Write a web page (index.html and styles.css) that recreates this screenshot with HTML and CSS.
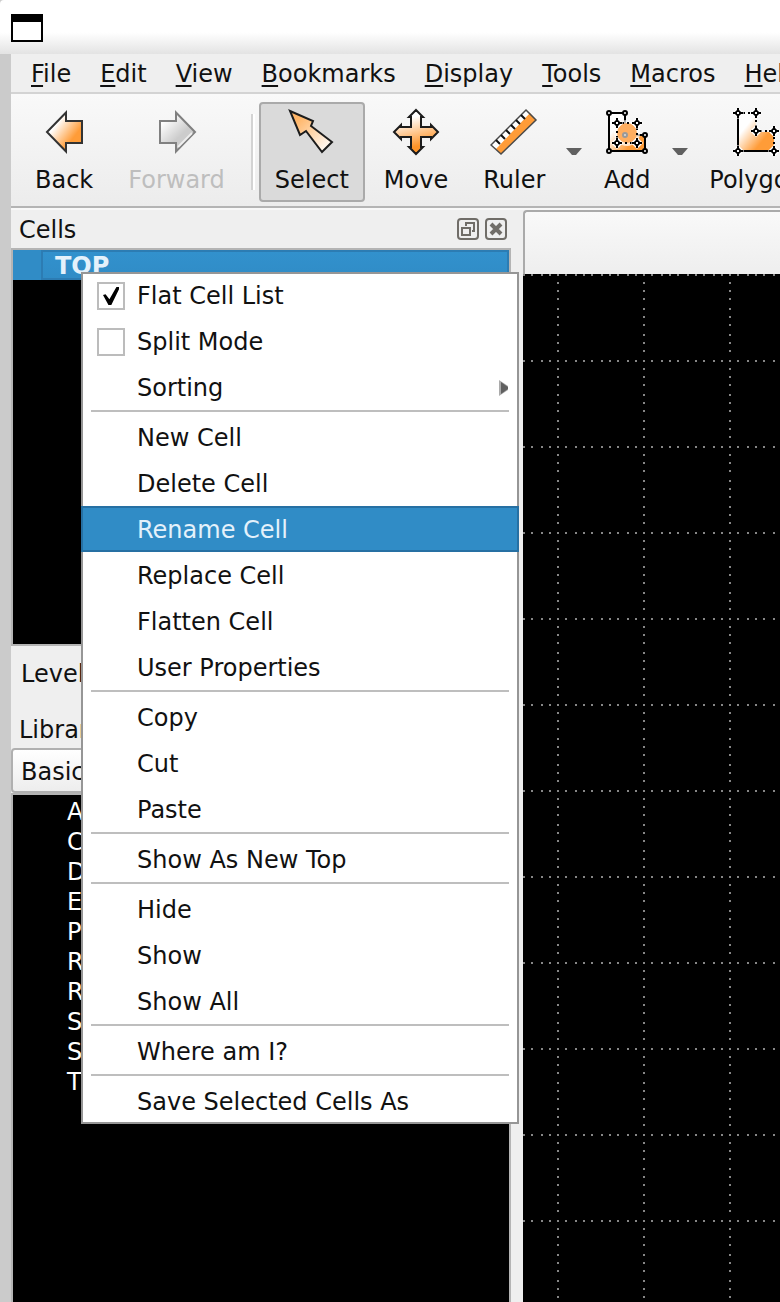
FILE: index.html
```html
<!DOCTYPE html>
<html lang="en">
<head>
<meta charset="utf-8">
<title>Layout Viewer</title>
<link rel="stylesheet" href="styles.css">
</head>
<body>
<div class="window">
  <header class="titlebar">
    <svg class="window-icon" width="32" height="28" viewBox="0 0 32 28" aria-hidden="true"><path d="M1 1h30v26H1z" fill="#fff" stroke="#000" stroke-width="2"/><path d="M0 0h32v8H0z"/></svg>
  </header>
  <div class="frame">
    <nav class="menubar" aria-label="Main menu">
      <button><u>F</u>ile</button><button><u>E</u>dit</button><button><u>V</u>iew</button><button><u>B</u>ookmarks</button><button><u>D</u>isplay</button><button><u>T</u>ools</button><button><u>M</u>acros</button><button><u>H</u>elp</button>
    </nav>
    <div class="toolbar" role="toolbar" aria-label="Tools">
      <button class="tool">
        <svg class="icon" viewBox="0 0 48 48"><defs><linearGradient id="warm" x1="0.15" y1="0.15" x2="0.85" y2="0.75"><stop offset="0.2" stop-color="#fff"/><stop offset="0.85" stop-color="#ff9c38"/></linearGradient></defs><path d="M7 24 26 4.500V13H42V35H26V43.500Z" fill="url(#warm)" stroke="#333" stroke-width="2"/></svg>
        <span>Back</span>
      </button>
      <button class="tool" disabled>
        <svg class="icon" viewBox="0 0 48 48"><defs><linearGradient id="grey" x1="0.1" y1="0.1" x2="0.7" y2="0.8"><stop offset="0.1" stop-color="#fff"/><stop offset="0.75" stop-color="#ccc"/></linearGradient></defs><path d="M42 24 23 4.500V13H7V35H23V43.500Z" fill="url(#grey)" stroke="#808080" stroke-width="2"/><path d="M25 39 39 25" stroke="#eee" stroke-width="2"/></svg>
        <span>Forward</span>
      </button>
      <span class="divider"></span>
      <button class="tool selected" aria-pressed="true">
        <svg class="icon" viewBox="0 0 48 48"><defs><linearGradient id="cursor" x1="0" y1="0" x2="1" y2="1"><stop offset="0.2" stop-color="#ffb669"/><stop offset="0.95" stop-color="#fff"/></linearGradient></defs><path d="M2 3 25 13 23 18 44 34 34 44 18 23 12 27Z" fill="url(#cursor)" stroke="#1c1c1c" stroke-width="2"/></svg>
        <span>Select</span>
      </button>
      <button class="tool">
        <svg class="icon" viewBox="0 0 48 48"><defs><linearGradient id="down" x1="0" y1="0" x2="0.25" y2="1"><stop offset="0.25" stop-color="#fff"/><stop offset="0.9" stop-color="#ff9428"/></linearGradient></defs><path d="M24 2 31 9H29V19H39V17L46 24 39 31V29H29V39H31L24 46 17 39H19V29H9V31L2 24 9 17V19H19V9H17Z" fill="url(#down)" stroke="#1c1c1c" stroke-width="2"/></svg>
        <span>Move</span>
      </button>
      <button class="tool">
        <svg class="icon" viewBox="0 0 48 48"><path d="M36 2 46 12 11 46 1 37Z" fill="#fff"/><path d="M40 5 46 12 11 46 6 41Z" fill="#ff9c38"/><path d="M36 2 46 12 11 46 1 37Z" fill="none" stroke="#4a4a4a" stroke-width="1.500"/><path d="M6 32l4 4M11 27l4 4M16 22l4 4M21 17l4 4M26 12l4 4M31 7l4 4" fill="none" stroke="#111" stroke-width="2"/></svg>
        <span>Ruler</span>
      </button>
      <button class="drop" aria-label="Ruler options"><svg width="16" height="8" viewBox="0 0 16 8"><path d="M0 0H16L10 7H6Z" fill="#606060"/></svg></button>
      <button class="tool">
        <svg class="icon" viewBox="0 0 48 48"><defs><symbol id="node" viewBox="0 0 12 12"><path d="M6 0 12 6 6 12 0 6Z" fill="#fff"/><path d="M6 1V11M1 6H11" stroke="#000" stroke-width="2"/><path d="M6 3 9 6 6 9 3 6Z" stroke="#000" stroke-width="1.500"/><path d="M5 5h2v2H5z" fill="#fff"/></symbol></defs><path d="M6 5H22V27H42V43H6Z" fill="url(#warm)"/><path d="M6 5H22V27H42V43H6Z" fill="none" stroke="#000" stroke-width="2"/><g fill="#fff" stroke="#000" stroke-width="2"><circle cx="6" cy="5" r="2"/><circle cx="22" cy="5" r="2"/><circle cx="42" cy="27" r="2"/><circle cx="42" cy="43" r="2"/><circle cx="6" cy="43" r="2"/></g><circle cx="24" cy="25" r="13" fill="#fff" opacity="0.700"/><circle cx="24" cy="25" r="10" fill="#ffae60"/><path d="M14 15H34V35H14Z" fill="none" stroke="#000" stroke-width="2" stroke-dasharray="2 3"/><circle cx="22" cy="27" r="2" fill="#ddd" stroke="#999" stroke-width="2"/><use href="#node" x="8" y="9" width="12" height="12"/><use href="#node" x="28" y="9" width="12" height="12"/><use href="#node" x="8" y="29" width="12" height="12"/><use href="#node" x="28" y="29" width="12" height="12"/></svg>
        <span>Add</span>
      </button>
      <button class="drop" aria-label="Add options"><svg width="16" height="8" viewBox="0 0 16 8"><path d="M0 0H16L10 7H6Z" fill="#606060"/></svg></button>
      <button class="tool">
        <svg class="icon" viewBox="0 0 48 48"><path d="M6 5H24Q22 20 28 24H42V36Q41 43 32 43H15Q6 43 6 32Z" fill="url(#warm)"/><path d="M6 5V43H42" fill="none" stroke="#000" stroke-width="2"/><path d="M6 5H24V23H42V43" fill="none" stroke="#000" stroke-width="2" stroke-dasharray="2 3"/><use href="#node" x="0" y="-1" width="12" height="12"/><use href="#node" x="18" y="-1" width="12" height="12"/><use href="#node" x="18" y="17" width="12" height="12"/><use href="#node" x="36" y="17" width="12" height="12"/><use href="#node" x="36" y="37" width="12" height="12"/><use href="#node" x="0" y="37" width="12" height="12"/></svg>
        <span>Polygon</span>
      </button>
    </div>
    <main class="workspace">
      <aside class="docks">
        <div class="dock-title">
          <h2>Cells</h2>
          <button class="dock-btn" aria-label="Float"><svg width="22" height="22" viewBox="0 0 22 22" fill="none" stroke="#706d68" stroke-width="2"><rect x="1" y="1" width="20" height="20" rx="3"/><path d="M5 10H13V17H5Z"/><path d="M9 8V5H17V13H15"/></svg></button>
          <button class="dock-btn" aria-label="Close"><svg width="22" height="22" viewBox="0 0 22 22" fill="none" stroke="#706d68" stroke-width="2"><rect x="1" y="1" width="20" height="20" rx="3"/><path d="M6 6 16 16M16 6 6 16" stroke-width="4"/></svg></button>
        </div>
        <div class="cells">
          <div class="cell-row"><span class="cell-name">TOP</span></div>
        </div>
        <div class="levels">Levels</div>
        <h2 class="libraries">Libraries</h2>
        <button class="library-select">Basic</button>
        <ul class="library">
          <li>ARC</li><li>CIRCLE</li><li>DONUT</li><li>ELLIPSE</li><li>PIE</li><li>ROUND_PATH</li><li>ROUND_POLYGON</li><li>STROKED_BOX</li><li>STROKED_POLYGON</li><li>TEXT</li>
        </ul>
      </aside>
      <section class="view">
        <div class="tabs"></div>
        <svg class="canvas" aria-label="Layout canvas">
          <defs>
            <pattern id="grid" x="34" y="0" width="86" height="86" patternUnits="userSpaceOnUse">
              <path d="M0 1H86" stroke="#868686" stroke-width="2" stroke-dasharray="2 6 2 8 2 6 2 6 2 8 2 6 2 6 2 8 2 6 2 6"/>
              <path d="M1 0V86" stroke="#868686" stroke-width="2" stroke-dasharray="2 6 2 6 2 6 2 8 2 6 2 6 2 8 2 6 2 6 2 8"/>
            </pattern>
          </defs>
          <rect width="100%" height="100%" fill="#000"/>
          <rect width="100%" height="100%" fill="url(#grid)"/>
        </svg>
      </section>
    </main>
  </div>
  <div class="popup" role="menu">
    <label class="item"><input type="checkbox" checked>Flat Cell List</label>
    <label class="item"><input type="checkbox">Split Mode</label>
    <button class="item" role="menuitem">Sorting<svg class="submenu" width="10" height="16" viewBox="0 0 10 16"><path d="M0 0 9 6V10L0 16Z" fill="#aaa"/><path d="M2 2 9 7V9L2 14Z" fill="#606060"/></svg></button>
    <hr>
    <button class="item" role="menuitem">New Cell</button>
    <button class="item" role="menuitem">Delete Cell</button>
    <button class="item active" role="menuitem">Rename Cell</button>
    <button class="item" role="menuitem">Replace Cell</button>
    <button class="item" role="menuitem">Flatten Cell</button>
    <button class="item" role="menuitem">User Properties</button>
    <hr>
    <button class="item" role="menuitem">Copy</button>
    <button class="item" role="menuitem">Cut</button>
    <button class="item" role="menuitem">Paste</button>
    <hr>
    <button class="item" role="menuitem">Show As New Top</button>
    <hr>
    <button class="item" role="menuitem">Hide</button>
    <button class="item" role="menuitem">Show</button>
    <button class="item" role="menuitem">Show All</button>
    <hr>
    <button class="item" role="menuitem">Where am I?</button>
    <hr>
    <button class="item" role="menuitem">Save Selected Cells As</button>
  </div>
</div>
</body>
</html>
```
FILE: styles.css
```css
* { box-sizing: border-box; }

body {
  margin: 0;
  background: #cbcbcb;
  color: #111;
  font: 24px/30px "DejaVu Sans", sans-serif;
}

button {
  border: 0;
  padding: 0;
  background: none;
  color: inherit;
  font: inherit;
}

h2 { margin: 0; font: inherit; }

.window {
  position: relative;
  display: flex;
  flex-direction: column;
  height: 100vh;
  overflow: hidden;
}

.titlebar {
  flex: none;
  height: 54px;
  padding: 14px 11px;
  border-top-left-radius: 4px;
  background: linear-gradient(#fff 60%, #e3e3e3);
}

.window-icon { display: block; }

.frame {
  flex: 1;
  display: flex;
  flex-direction: column;
  min-height: 0;
  margin-left: 11px;
  background: #efefef;
}

.menubar {
  flex: none;
  display: flex;
  gap: 1px;
  height: 40px;
  padding: 2px 0 0 6px;
  border-bottom: 2px solid #d3d3d3;
}

.menubar button { flex: none; padding: 0 14px; }

.menubar u { text-decoration-thickness: 2px; text-underline-offset: 3px; }

.toolbar {
  flex: none;
  display: flex;
  align-items: center;
  gap: 3px;
  height: 114px;
  padding: 4px 0 0 8px;
  border-bottom: 2px solid #b4b4b4;
  background: linear-gradient(#f9f9f9, #ececec);
}

.tool {
  flex: none;
  display: flex;
  flex-direction: column;
  align-items: center;
  gap: 9px;
  height: 100px;
  padding: 4px 14px;
  border: 2px solid transparent;
  border-radius: 4px;
}

.tool:disabled { color: #bebebe; }

.tool.selected { border-color: #aaa; background: #dadada; }

.icon { flex: none; width: 48px; height: 48px; }

.divider {
  flex: none;
  width: 4px;
  height: 76px;
  margin: 0 1px 0 7px;
  border-left: 2px solid #d3d3d3;
  border-right: 2px solid #fff;
}

.drop { flex: none; display: flex; width: 20px; padding: 0 2px; }

.workspace {
  flex: 1;
  display: grid;
  grid-template-columns: 500px 1fr;
  gap: 12px;
  min-height: 0;
  border-top: 2px solid #f8f8f8;
}

.docks { display: flex; flex-direction: column; min-height: 0; }

.dock-title {
  flex: none;
  display: flex;
  align-items: center;
  gap: 6px;
  height: 38px;
  padding: 0 4px 0 8px;
}

.dock-title h2 { flex: 1; padding-top: 2px; }

.dock-btn { display: flex; }

.cells {
  flex: none;
  height: 398px;
  border: 2px solid #b4b4b4;
  background: #000;
}

.cell-row {
  display: flex;
  height: 30px;
  padding-left: 28px;
  background: #308cc6;
  color: #e4f1fb;
  font-weight: bold;
}

.cell-name {
  flex: 1;
  padding-left: 12px;
  border: 2px solid #2c7cb3;
  background: linear-gradient(#3291cd, #308cc6);
  line-height: 28px;
}

.levels { padding: 13px 10px 12px; }

.libraries { padding: 14px 8px 3px; }

.library-select {
  height: 45px;
  padding: 2px 8px 0;
  border: 2px solid #b0b0b0;
  border-radius: 4px;
  background: linear-gradient(#fff, #ededed);
  text-align: left;
}

.library {
  flex: 1;
  min-height: 0;
  margin: 0;
  padding: 2px 0 0 54px;
  border: 2px solid #b4b4b4;
  border-bottom: 0;
  background: #000;
  color: #fff;
  list-style: none;
}

.view { display: flex; flex-direction: column; min-width: 0; min-height: 0; }

.tabs {
  flex: none;
  height: 64px;
  border: solid #aaa;
  border-width: 2px 0 0 2px;
  border-top-left-radius: 4px;
  background: linear-gradient(#f9f9f9, #eee);
}

.canvas { flex: 1; width: 100%; min-height: 0; }

.popup {
  position: absolute;
  top: 272px;
  left: 81px;
  width: 438px;
  background: #fff;
  box-shadow: inset 0 0 0 2px #969696;
}

.item {
  display: flex;
  align-items: center;
  width: 100%;
  height: 46px;
  padding: 2px 10px 0 56px;
  text-align: left;
}

.item.active {
  border: solid #2670a3;
  border-width: 2px;
  padding-left: 54px;
  background: #308cc6;
  color: #e4f1fb;
}

.item input {
  appearance: none;
  display: grid;
  width: 28px;
  height: 28px;
  margin: 0 12px 0 -40px;
  border: 2px solid #bcbcbc;
  background: #fff;
}

.item input:checked::before {
  content: "";
  width: 16px;
  height: 18px;
  margin: 3px 4px;
  background: #000;
  clip-path: polygon(0 44%, 16% 40%, 40% 68%, 84% 0, 100% 0, 100% 12%, 52% 100%, 34% 100%);
}

.submenu { margin-left: auto; }

.popup hr {
  height: 4px;
  margin: 0 10px;
  border: 0;
  border-top: 2px solid #bebebe;
}
```
